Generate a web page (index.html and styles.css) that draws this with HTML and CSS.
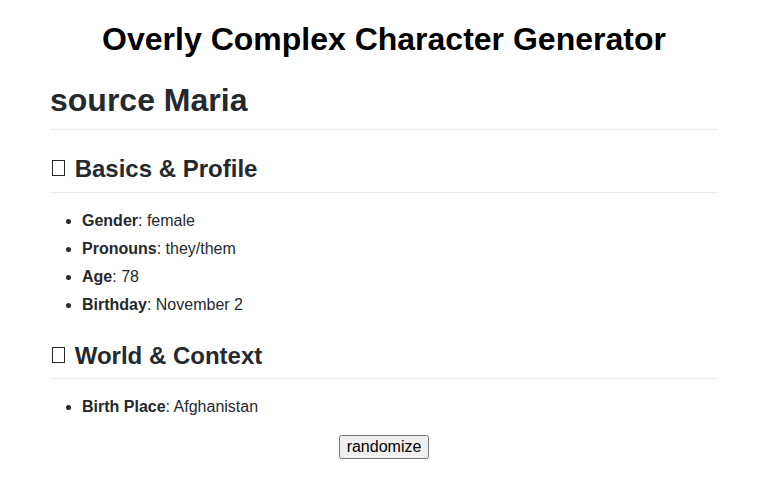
FILE: index.html
```html
<!DOCTYPE html>
<html lang="en">
<head>
<meta charset="utf-8">
<title>Overly Complex Character Generator</title>
<link rel="stylesheet" href="styles.css">
</head>
<body>
<h1 class="app-title">Overly Complex Character Generator</h1>
<main class="sheet">
  <h1 class="name">source Maria</h1>

  <h2 class="section"><span class="tofu" aria-hidden="true"></span> Basics &amp; Profile</h2>
  <ul class="facts">
    <li><strong>Gender</strong>: female</li>
    <li><strong>Pronouns</strong>: they/them</li>
    <li><strong>Age</strong>: 78</li>
    <li><strong>Birthday</strong>: November 2</li>
  </ul>

  <h2 class="section"><span class="tofu" aria-hidden="true"></span> World &amp; Context</h2>
  <ul class="facts">
    <li><strong>Birth Place</strong>: Afghanistan</li>
  </ul>
</main>
<div class="actions">
  <button class="randomize" type="button">randomize</button>
</div>
</body>
</html>
```
FILE: styles.css
```css
html, body {
  margin: 0;
  padding: 0;
  background: #ffffff;
}

body {
  font-family: "Liberation Sans", Arial, Helvetica, sans-serif;
  font-size: 16px;
  color: #24292e;
}

.app-title {
  margin: 0.67em 0;
  font-size: 32px;
  line-height: normal;
  font-weight: bold;
  text-align: center;
  color: #000000;
}

.sheet {
  width: 668px;
  margin: 0 auto;
  line-height: 1.5;
}

.name {
  margin: 0.67em 0 0;
  padding-bottom: 0.3em;
  font-size: 32px;
  line-height: 1.25;
  font-weight: 600;
  border-bottom: 1px solid #eaecef;
}

.section {
  margin: 24px 0 16px;
  padding-bottom: 0.3em;
  font-size: 24px;
  line-height: 1.25;
  font-weight: 600;
  border-bottom: 1px solid #eaecef;
}

.tofu {
  display: inline-block;
  box-sizing: border-box;
  width: 13px;
  height: 16px;
  margin: 0 3px 1px 2px;
  border: 1.5px solid #24292e;
}

.facts {
  margin: 0 0 16px;
  padding-left: 2em;
}

.facts li + li {
  margin-top: 0.25em;
}

.facts strong {
  font-weight: 600;
}

.actions {
  text-align: center;
}

.randomize {
  font-family: "Liberation Sans", Arial, sans-serif;
  font-size: 16px;
  color: #000000;
}
```
